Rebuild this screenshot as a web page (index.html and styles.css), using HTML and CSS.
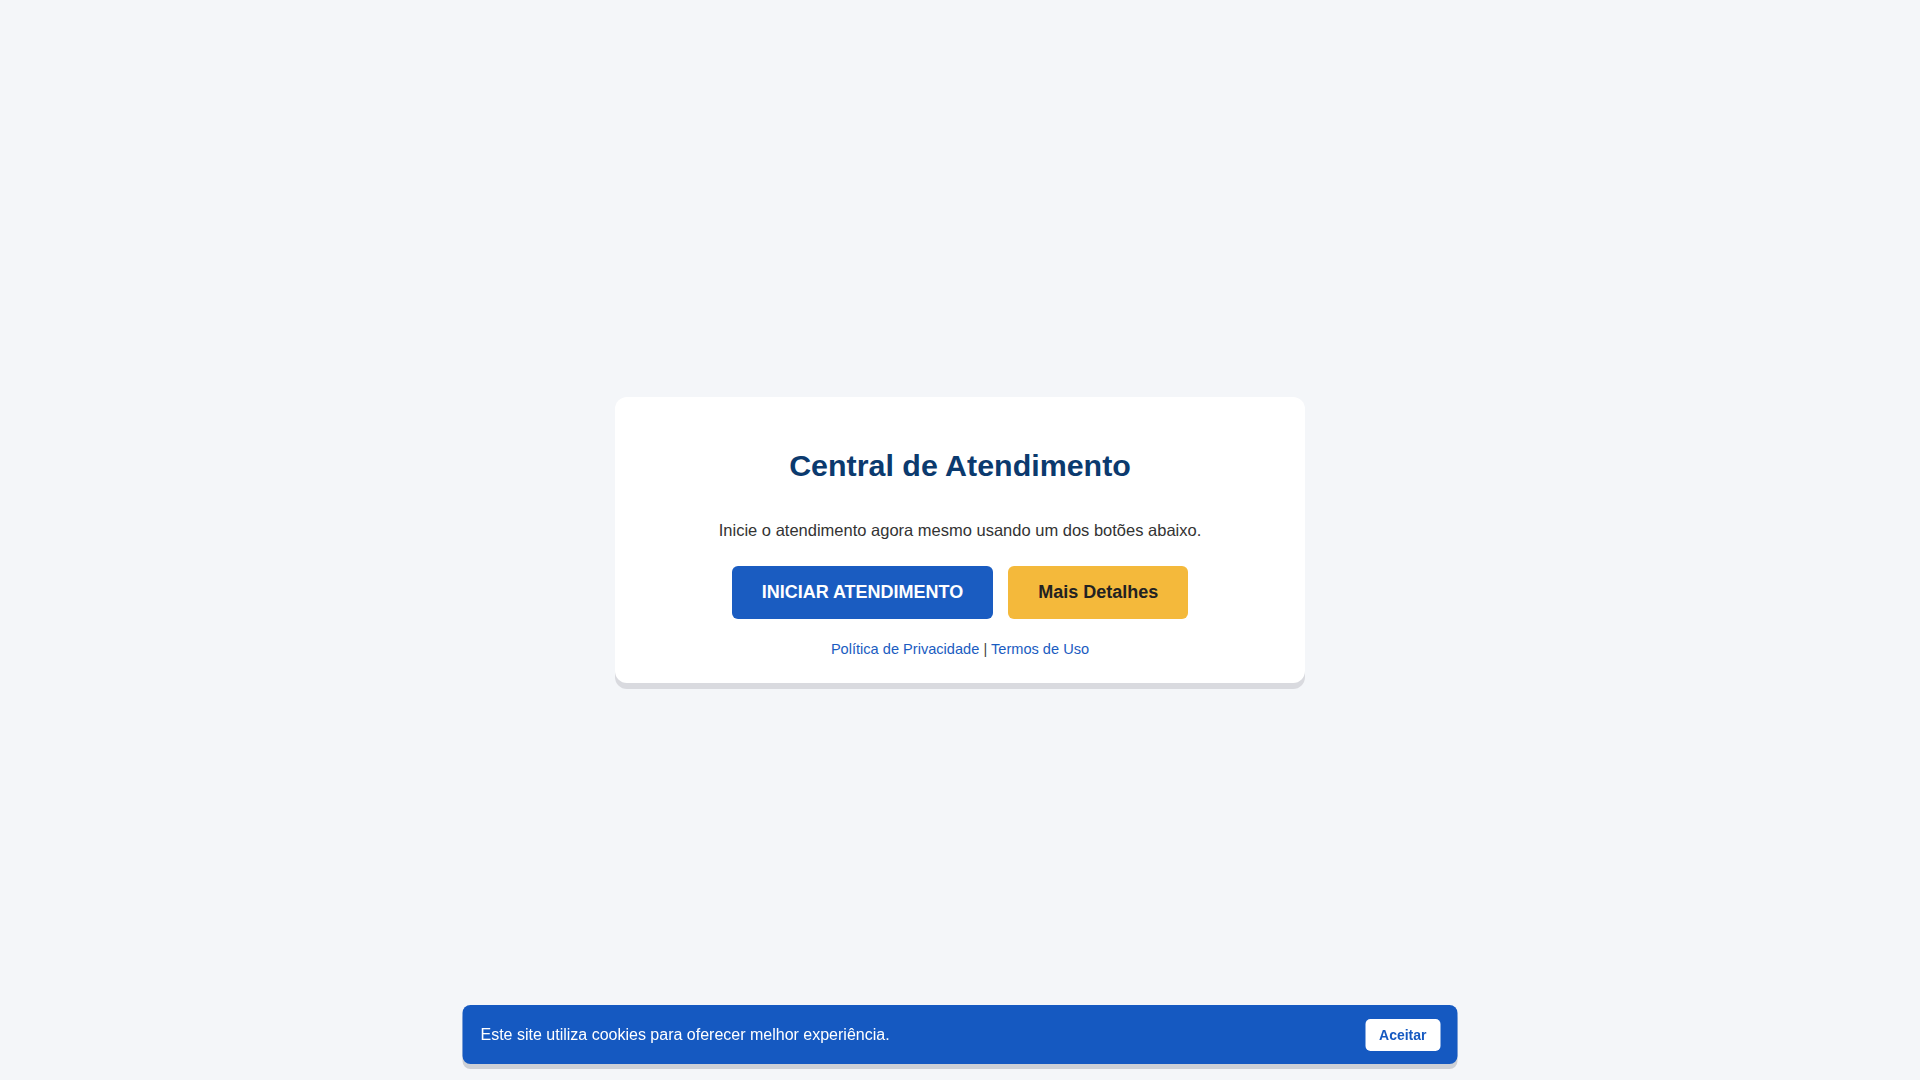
FILE: index.html
```html
<!DOCTYPE html>
<html lang="pt-BR">
<head>
<meta charset="utf-8">
<title>Central de Atendimento</title>
<link rel="stylesheet" href="styles.css">
</head>
<body>
<main class="page">
  <section class="card">
    <h1 class="title">Central de Atendimento</h1>
    <p class="lead">Inicie o atendimento agora mesmo usando um dos botões abaixo.</p>
    <div class="actions">
      <a class="btn btn-primary" href="#">INICIAR ATENDIMENTO</a>
      <a class="btn btn-secondary" href="#">Mais Detalhes</a>
    </div>
    <p class="links"><a href="#">Política de Privacidade</a> | <a href="#">Termos de Uso</a></p>
  </section>
</main>
<div class="cookie">
  <span class="cookie-text">Este site utiliza cookies para oferecer melhor experiência.</span>
  <button class="cookie-btn" type="button">Aceitar</button>
</div>
</body>
</html>
```

FILE: styles.css
```css
* { box-sizing: border-box; }
html, body { margin: 0; padding: 0; }
body {
  background: #f4f6f9;
  font-family: "Liberation Sans", Arial, sans-serif;
  color: #333;
}
.page {
  min-height: 100vh;
  display: flex;
  align-items: center;
  justify-content: center;
}
.card {
  width: 690px;
  background: #fff;
  border-radius: 12px;
  box-shadow: 0 6px 0 #d9dadf;
  padding: 51px 40px 25px;
  text-align: center;
}
.title {
  margin: 0 0 37px;
  font-size: 30.4px;
  line-height: 35px;
  font-weight: 700;
  color: #0b3a6e;
}
.lead {
  margin: 0 0 26px;
  font-size: 16.5px;
  line-height: 20px;
  color: #333;
}
.actions {
  display: flex;
  justify-content: center;
  gap: 15px;
}
.btn {
  display: inline-block;
  padding: 16px 30px 17px;
  border-radius: 6px;
  font-size: 18px;
  line-height: 20px;
  font-weight: 700;
  text-decoration: none;
}
.btn-primary { background: #1a5cc1; color: #fff; }
.btn-secondary { background: #f4b93b; color: #222; }
.links {
  margin: 22px 0 0;
  font-size: 14.6px;
  line-height: 17px;
  color: #444;
}
.links a { color: #1a5cc1; text-decoration: none; }
.cookie {
  position: fixed;
  left: 50%;
  bottom: 16px;
  transform: translateX(-50%);
  width: 995px;
  height: 59px;
  background: #1559c1;
  border-radius: 8px;
  box-shadow: 0 5px 0 #cdd0d6;
  padding: 0 17px 0 18px;
  display: flex;
  align-items: center;
  justify-content: space-between;
  color: #fff;
}
.cookie-text { font-size: 16px; }
.cookie-btn {
  font-family: "Liberation Sans", Arial, sans-serif;
  border: 0;
  background: #fff;
  color: #1559c1;
  font-weight: 700;
  font-size: 14px;
  line-height: 16px;
  padding: 8px 14px;
  border-radius: 5px;
  cursor: pointer;
}
```
